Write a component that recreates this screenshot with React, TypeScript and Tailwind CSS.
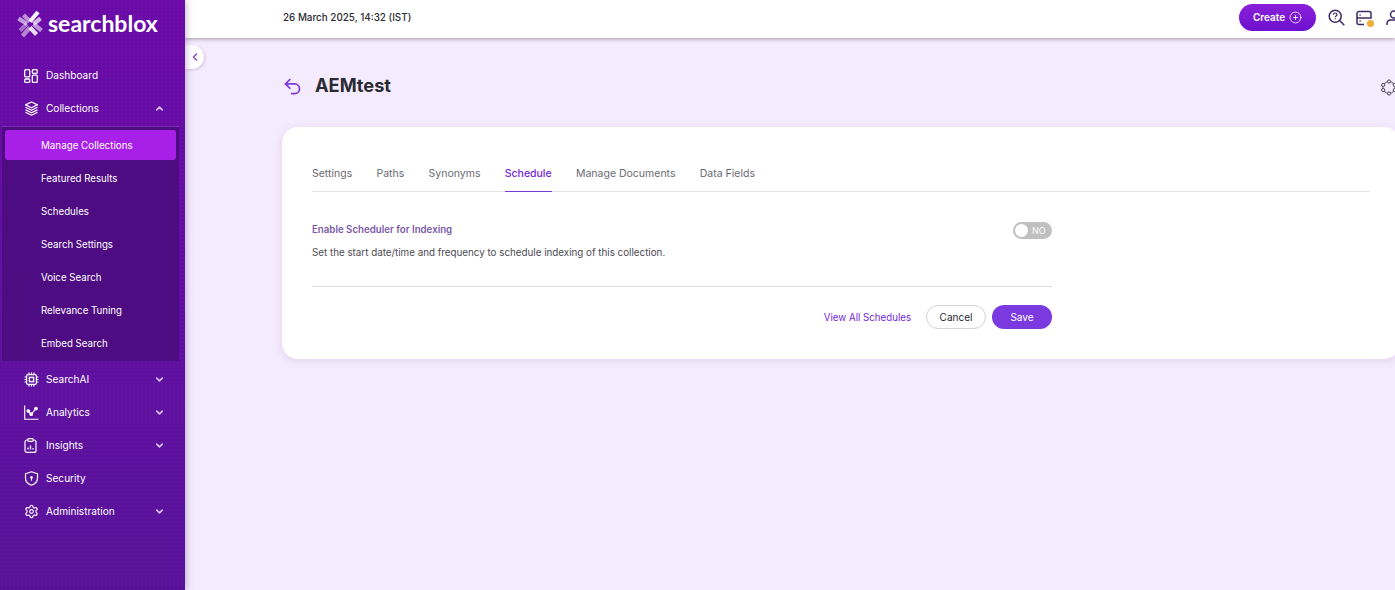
import React from "react";
import { ChevronDown, ChevronLeft, ChevronUp, CirclePlus, Settings, Undo2 } from "lucide-react";

const subItems = [
  "Manage Collections",
  "Featured Results",
  "Schedules",
  "Search Settings",
  "Voice Search",
  "Relevance Tuning",
  "Embed Search",
];

const tabs = ["Settings", "Paths", "Synonyms", "Schedule", "Manage Documents", "Data Fields"];

const DashboardIcon = () => (
  <svg width="14" height="14" viewBox="0 0 14 14" fill="none" stroke="currentColor" strokeWidth="1.3">
    <rect x="0.7" y="0.7" width="5" height="7.2" rx="1" />
    <rect x="8.3" y="0.7" width="5" height="3.6" rx="1" />
    <rect x="0.7" y="10" width="5" height="3.4" rx="1" />
    <rect x="8.3" y="6.2" width="5" height="7.2" rx="1" />
  </svg>
);

const LayersIcon = () => (
  <svg width="15" height="15" viewBox="0 0 15 15" fill="none" stroke="currentColor" strokeWidth="1.2" strokeLinejoin="round">
    <path d="M7.5 1 13.5 3.9 7.5 6.8 1.5 3.9z" />
    <path d="M1.5 6.3 7.5 9.2 13.5 6.3" />
    <path d="M1.5 8.9 7.5 11.8 13.5 8.9" />
    <path d="M1.5 11.3 7.5 14.2 13.5 11.3" />
  </svg>
);

const ChipIcon = () => (
  <svg width="15" height="15" viewBox="0 0 15 15" fill="none" stroke="currentColor" strokeWidth="1.2">
    <rect x="2.6" y="2.6" width="9.8" height="9.8" rx="1.4" />
    <rect x="5.4" y="5.4" width="4.2" height="4.2" strokeWidth="1.4" />
    <path d="M5 0.5v2M7.5 0.5v2M10 0.5v2M5 12.5v2M7.5 12.5v2M10 12.5v2M0.5 5h2M0.5 7.5h2M0.5 10h2M12.5 5h2M12.5 7.5h2M12.5 10h2" />
  </svg>
);

const AnalyticsIcon = () => (
  <svg width="15" height="15" viewBox="0 0 15 15" fill="none" stroke="currentColor" strokeWidth="1.1">
    <path d="M0.7 0.5v13.8h13.8" />
    <path d="M4.5 6.2 7 9.5 11.5 4.2" />
    <circle cx="4.3" cy="6" r="1.3" fill="currentColor" />
    <circle cx="7.2" cy="9.2" r="1.3" fill="currentColor" />
    <circle cx="12" cy="3.6" r="1.3" fill="currentColor" />
  </svg>
);

const InsightsIcon = () => (
  <svg width="13" height="15" viewBox="0 0 13 15" fill="none" stroke="currentColor" strokeWidth="1.2">
    <rect x="1" y="2" width="11" height="12.4" rx="2" />
    <rect x="3.8" y="0.7" width="5.4" height="2.6" rx="1" fill="#5d1199" />
    <path d="M4 11.5V9.5M6.5 11.5V7.5M9 11.5V10" strokeWidth="1.3" />
  </svg>
);

const ShieldIcon = () => (
  <svg width="15" height="15" viewBox="0 0 15 15" fill="none" stroke="currentColor" strokeWidth="1.2" strokeLinejoin="round">
    <path d="M7.5 0.8 13.5 2.8V7c0 3.6-2.6 6-6 7.2C4.1 13 1.5 10.6 1.5 7V2.8z" />
    <circle cx="7.5" cy="6.2" r="1.2" fill="currentColor" stroke="none" />
    <path d="M7.5 6.5v3.2" />
  </svg>
);

const LensIcon = () => (
  <svg width="17" height="17" viewBox="0 0 17 17" fill="none" stroke="#3b2a63" strokeWidth="1.5">
    <circle cx="7.2" cy="7.2" r="6" />
    <path d="m11.5 11.5 4.8 4.8" />
    <path d="M5.4 5.7c0-2.3 3.6-2.3 3.6 0 0 1.3-1.8 1.2-1.8 2.6" strokeWidth="1.2" />
    <path d="M7.2 9.3v1" strokeWidth="1.2" />
  </svg>
);

const ServerIcon = () => (
  <svg width="16" height="16" viewBox="0 0 16 16" fill="none" stroke="#3b2a63" strokeWidth="1.5">
    <path d="M8 14.5H3a2 2 0 0 1-2-2v-9a2 2 0 0 1 2-2h10a2 2 0 0 1 2 2V8H1" />
    <path d="M3.5 5h1.2M3.5 11h1.2" />
  </svg>
);

const UserIcon = () => (
  <svg width="16" height="16" viewBox="0 0 16 16" fill="none" stroke="#3b2a63" strokeWidth="1.5">
    <circle cx="8" cy="4.5" r="3.5" />
    <path d="M1 15v-1.5A3.5 3.5 0 0 1 4.5 10h7a3.5 3.5 0 0 1 3.5 3.5V15" />
  </svg>
);

const OrgIcon = () => (
  <svg width="16" height="17" viewBox="0 0 16 17" fill="none" stroke="#4b4b57" strokeWidth="1">
    <circle cx="8" cy="8.5" r="6" />
    <g fill="#f5ebfe">
      <circle cx="8" cy="2.5" r="1.6" />
      <circle cx="8" cy="14.5" r="1.6" />
      <circle cx="2.2" cy="6" r="1.6" />
      <circle cx="2.2" cy="11" r="1.6" />
      <circle cx="13.8" cy="6" r="1.6" />
      <circle cx="13.8" cy="11" r="1.6" />
    </g>
  </svg>
);

const LogoMark = () => (
  <svg width="30" height="30" viewBox="0 0 30 30" fill="none" stroke="#fff" strokeWidth="4.2">
    <path d="M15 12.5 23 3" opacity="0.95" />
    <path d="M15 12.5 8.5 6" opacity="0.55" />
    <path d="M12 15 3.5 9.5" opacity="0.6" />
    <path d="M12 15 5 21.5" opacity="0.4" />
    <path d="M18.5 15 25.5 9.5" opacity="0.7" />
    <path d="M18.5 15 26.5 21.5" opacity="0.55" />
    <path d="M15 18.5 7.5 27" opacity="0.5" />
    <path d="M15 18.5 21.5 25.5" opacity="0.85" />
  </svg>
);

const NavRow = ({
  icon,
  label,
  chevron,
}: {
  icon: React.ReactNode;
  label: string;
  chevron?: "up" | "down";
}) => (
  <div className="flex h-[33px] items-center pl-[24px] pr-[20px] text-white">
    <span className="flex w-[22px] shrink-0 items-center">{icon}</span>
    <span className="text-[10.1px]">{label}</span>
    {chevron === "down" && <ChevronDown size={11} strokeWidth={3.5} className="ml-auto text-[#d8c2ee]" />}
    {chevron === "up" && <ChevronUp size={11} strokeWidth={3.5} className="ml-auto text-[#d8c2ee]" />}
  </div>
);

export default function App() {
  return (
    <div className="flex h-[590px] w-[1395px] overflow-hidden bg-[#f5ebfe] font-['Inter',sans-serif]">
      <aside className="z-20 flex w-[185px] shrink-0 flex-col bg-[radial-gradient(rgba(255,255,255,0.025)_1px,transparent_1px),linear-gradient(to_bottom,#6a0aa8,#58129a)] bg-[size:4px_4px,100%_100%] shadow-[2px_0_6px_rgba(60,30,110,0.25)]">
        <div className="flex h-[59px] items-start pl-[15px] pt-[9px]">
          <LogoMark />
          <span className="ml-[3px] font-['Lato',sans-serif] text-[23px] leading-[28px] font-bold text-white">
            searchblox
          </span>
        </div>
        <NavRow icon={<DashboardIcon />} label="Dashboard" />
        <NavRow icon={<LayersIcon />} label="Collections" chevron="up" />
        <div className="mx-[2px] mt-[1px] mb-[2px] flex h-[235px] w-[177px] flex-col border-t border-[#7a2ab5] bg-[#4e0c82] px-[3px] pt-[3px]">
          {subItems.map((item, i) => (
            <div
              key={item}
              className={
                i === 0
                  ? "mb-[2px] flex h-[30px] shrink-0 items-center rounded-[3px] bg-[#a81fe8] pl-[36px] pt-[2px] text-[9.8px] text-white"
                  : "flex h-[33px] shrink-0 items-center pl-[36px] pt-[1px] text-[9.7px] text-white"
              }
            >
              {item}
            </div>
          ))}
        </div>
        <NavRow icon={<ChipIcon />} label="SearchAI" chevron="down" />
        <NavRow icon={<AnalyticsIcon />} label="Analytics" chevron="down" />
        <NavRow icon={<InsightsIcon />} label="Insights" chevron="down" />
        <NavRow icon={<ShieldIcon />} label="Security" />
        <NavRow icon={<Settings size={15} strokeWidth={1.8} />} label="Administration" chevron="down" />
      </aside>

      <div className="relative flex min-w-0 flex-1 flex-col">
        <header className="z-10 flex h-[38px] shrink-0 items-center bg-white pb-[3px] pl-[98px] shadow-[0_1px_4px_rgba(0,0,0,0.35)]">
          <span className="mb-[1px] text-[9.85px] font-medium text-[#2b2b33]">26 March 2025, 14:32 (IST)</span>
          <div className="ml-auto flex w-[156px] shrink-0 items-center">
            <div className="flex h-[27px] w-[77px] shrink-0 items-center justify-center gap-[4px] rounded-full bg-gradient-to-b from-[#8a1fd8] to-[#6d0fcf] text-[10px] font-semibold text-white">
              <span className="mb-[1px]">Create</span>
              <CirclePlus size={13} strokeWidth={1.5} />
            </div>
            <span className="ml-[12px] shrink-0">
              <LensIcon />
            </span>
            <span className="relative ml-[11px] mt-[1px] shrink-0">
              <ServerIcon />
              <span className="absolute right-[-2px] bottom-[-1px] h-[7px] w-[7px] rounded-full bg-[#f2ac38]" />
            </span>
            <span className="ml-[14px] mt-[1px] shrink-0">
              <UserIcon />
            </span>
          </div>
        </header>

        <button className="absolute left-0 top-[45px] z-10 flex h-[24px] w-[19px] items-center justify-center rounded-r-full bg-white shadow-[1px_1px_3px_rgba(60,30,110,0.2)]">
          <ChevronLeft size={12} strokeWidth={2.5} className="text-[#7c3ad8]" />
        </button>

        <main className="w-[1215px] shrink-0 pl-[97px] pt-[36px]">
          <div className="flex h-[24px] items-center">
            <Undo2 size={21} strokeWidth={2} className="text-[#7c3ad8]" />
            <h1 className="mb-[1px] ml-[12px] text-[18.2px] font-bold text-[#2a2a32]">AEMtest</h1>
            <span className="ml-auto mr-[3px] mt-[2px]">
              <OrgIcon />
            </span>
          </div>

          <section className="mt-[29px] h-[232px] w-[1118px] rounded-[16px] bg-white px-[30px] pt-[34px] shadow-[0_2px_8px_rgba(80,40,140,0.12)]">
            <div className="flex h-[31px] gap-[24.3px] border-b border-[#e4e4e8]">
              {tabs.map((tab) =>
                tab === "Schedule" ? (
                  <span
                    key={tab}
                    className="-mb-px border-b border-[#7c3ad8] pt-[5px] text-[10.5px] font-medium text-[#7327d8]"
                  >
                    {tab}
                  </span>
                ) : (
                  <span key={tab} className="pt-[5px] text-[10.5px] text-[#6a6a72]">
                    {tab}
                  </span>
                ),
              )}
            </div>

            <div className="w-[740px]">
              <div className="mt-[30px] flex h-[17px] items-center justify-between">
                <span className="mb-[1px] text-[9.7px] font-semibold text-[#7a5aa8]">Enable Scheduler for Indexing</span>
                <span className="flex h-[17px] w-[39px] items-center rounded-full bg-[#c0c0c0] pl-[2px]">
                  <span className="h-[13px] w-[13px] rounded-full bg-white" />
                  <span className="ml-[4px] text-[9px] text-white">NO</span>
                </span>
              </div>
              <p className="mt-[7px] text-[9.8px] leading-[14px] text-[#4a4a52]">
                Set the start date/time and frequency to schedule indexing of this collection.
              </p>
              <div className="mt-[26px] border-t border-[#dcdce0]" />
              <div className="mt-[18px] flex items-center justify-end">
                <span className="mt-[2px] text-[9.7px] text-[#7327d8]">View All Schedules</span>
                <button className="ml-[15px] h-[24px] w-[60px] rounded-full border border-[#d4d4d8] text-[10px] text-[#26262e]">
                  Cancel
                </button>
                <button className="ml-[6px] h-[24px] w-[60px] rounded-full bg-[#7a3ae0] text-[10px] text-white">
                  Save
                </button>
              </div>
            </div>
          </section>
        </main>
      </div>
    </div>
  );
}
